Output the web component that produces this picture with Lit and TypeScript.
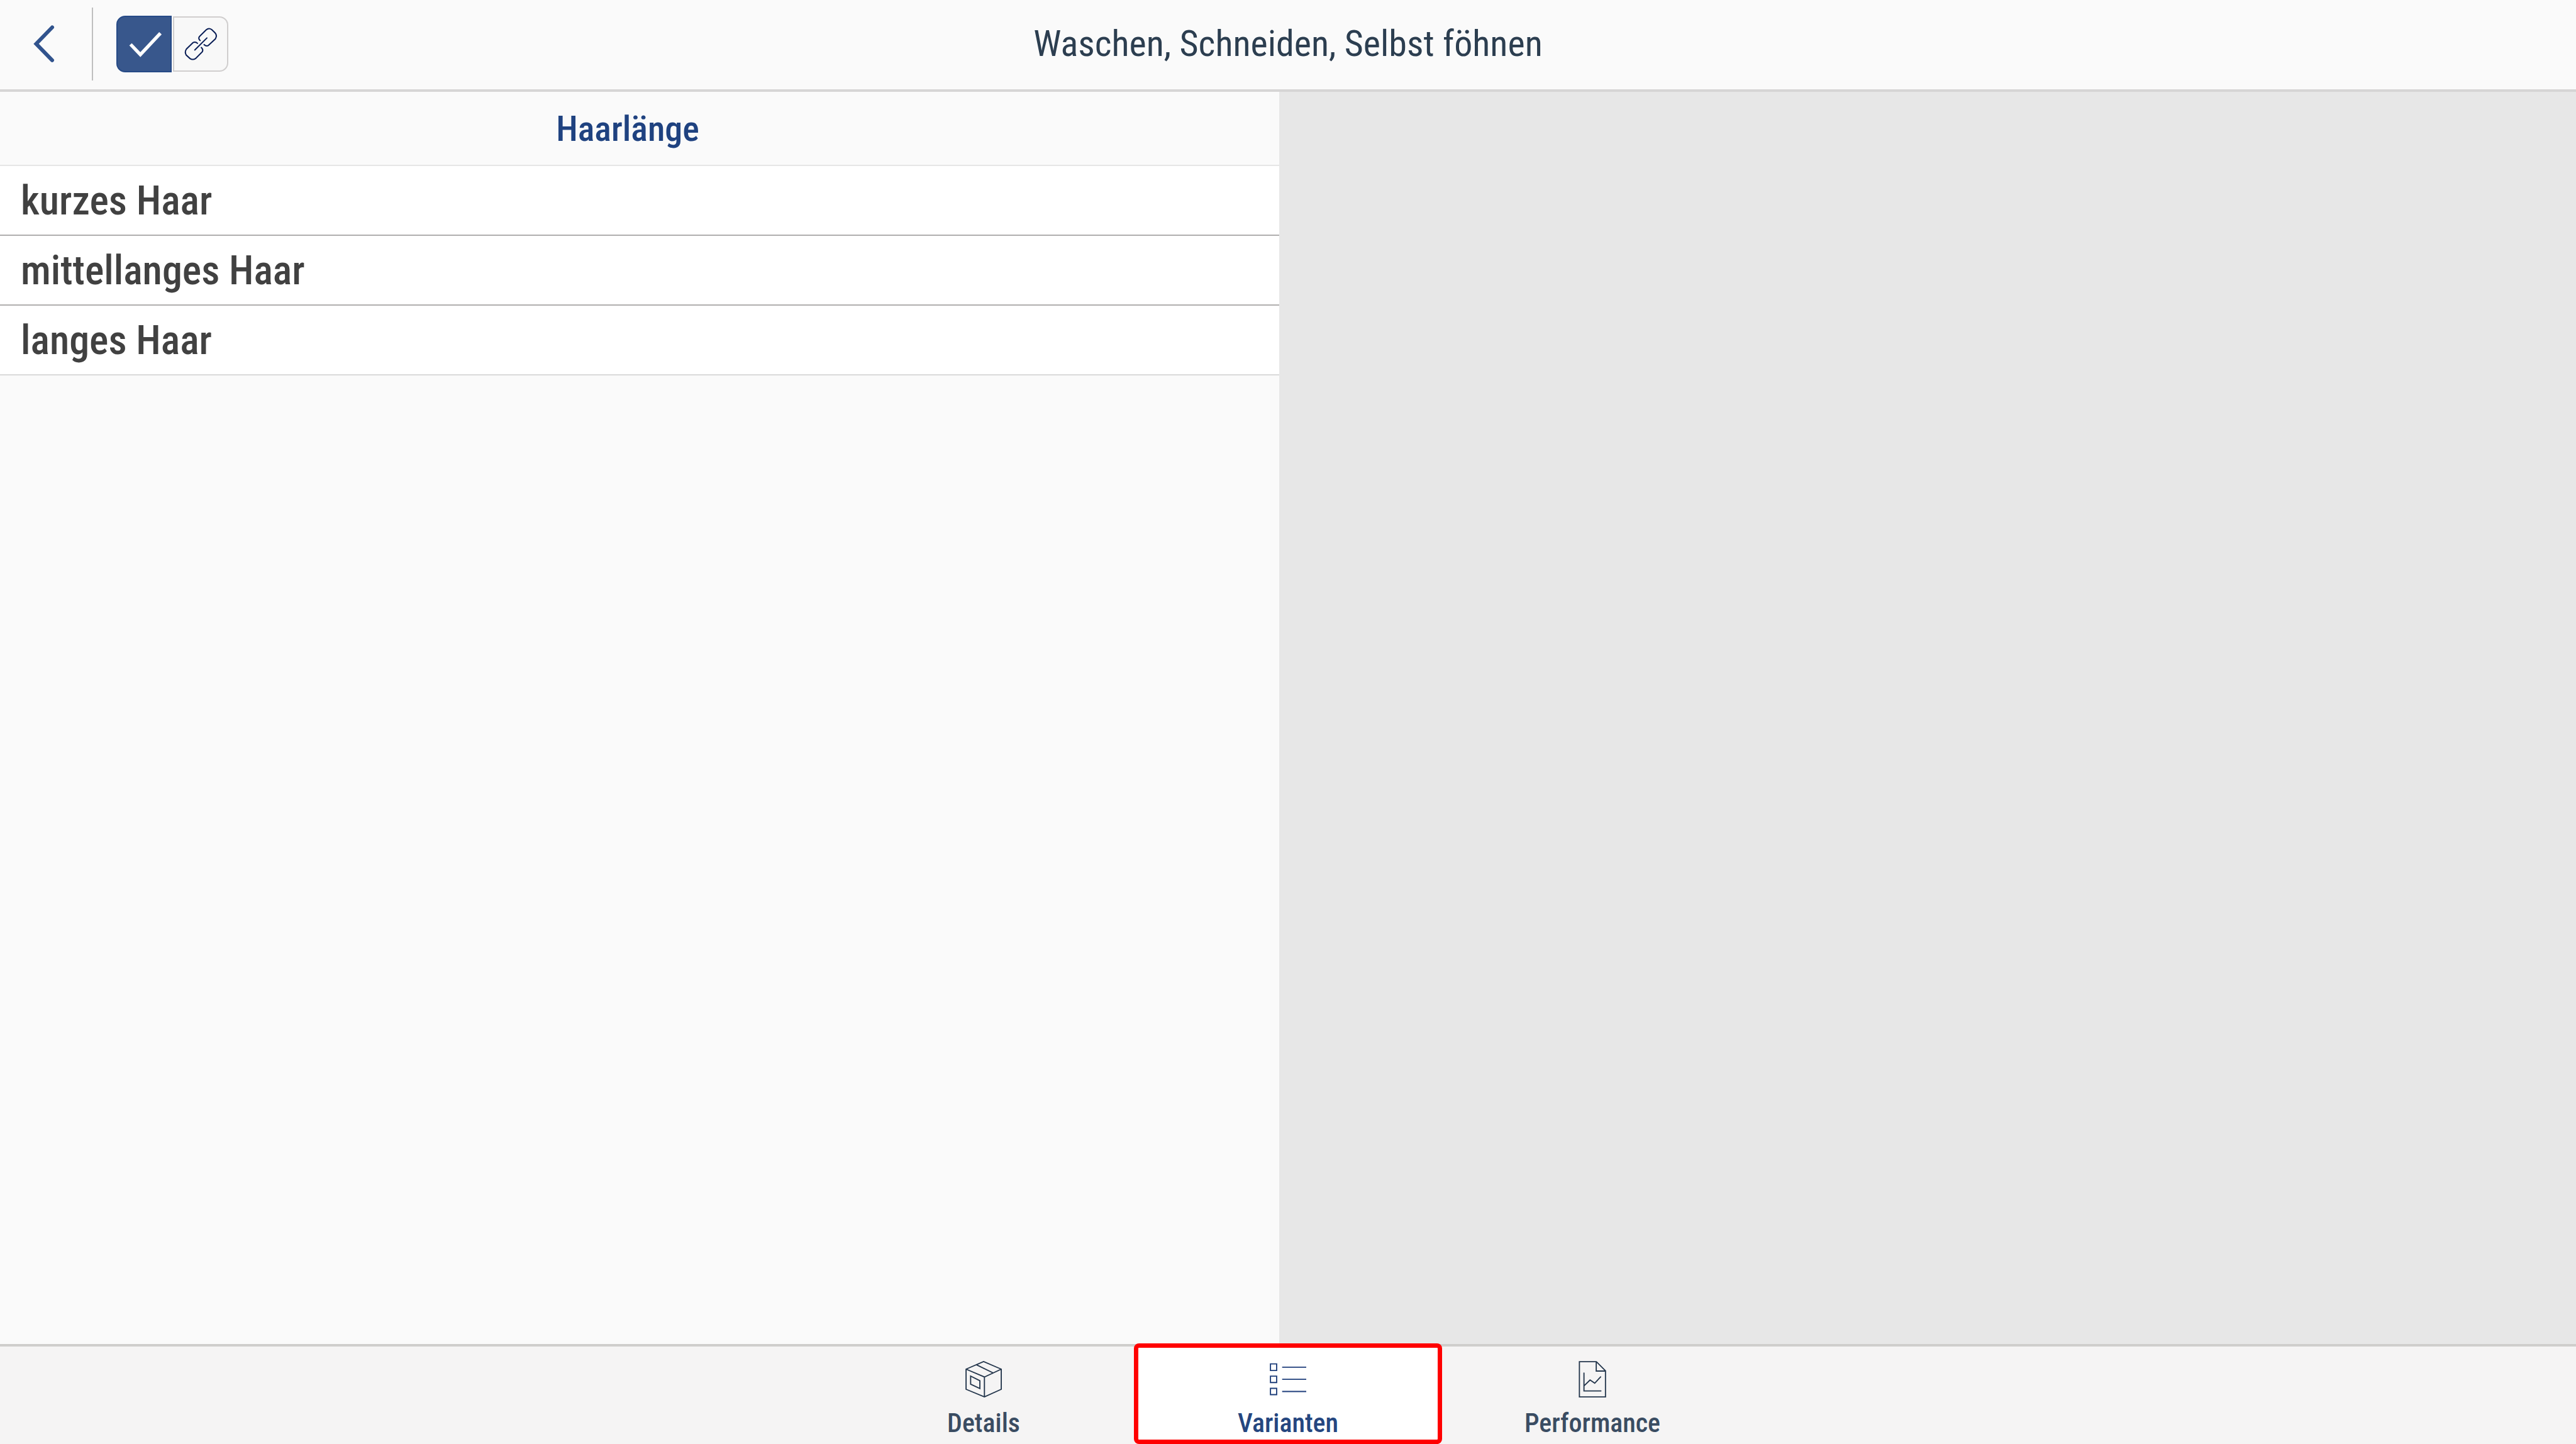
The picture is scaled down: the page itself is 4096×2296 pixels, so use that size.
import { LitElement, html, svg, css } from "lit";
import { customElement, state } from "lit/decorators.js";
import { classMap } from "lit/directives/class-map.js";

const boxIcon = svg`
  <path d="M356 270 506 205 657 270V442L513 507 356 442ZM356 270 513 337 657 270M513 337V507M446 233 585 301"/>
  <path d="M395 329 474 369V436L395 398Z"/>`;

const listIcon = svg`
  <path d="M1318 225H1371V281H1318ZM1318 330H1371V384H1318ZM1318 434H1371V488H1318Z"/>
  <path d="M1418 253H1624M1418 357H1624M1418 461H1624"/>`;

const reportIcon = svg`
  <path d="M670 206H815L893 284V507H670ZM814 206V286H893"/>
  <path stroke-linecap="round" d="M709 303V456H854M709 413 761 363 801 390 851 336"/>`;

const tabs = [
  { id: "details", label: "Details", viewBox: "350 200 312 312", icon: boxIcon },
  { id: "variants", label: "Varianten", viewBox: "1312 200 312 312", icon: listIcon },
  { id: "performance", label: "Performance", viewBox: "625 200 312 312", icon: reportIcon },
];

const lengths = ["kurzes Haar", "mittellanges Haar", "langes Haar"];

@customElement("app-root")
export class AppRoot extends LitElement {
  static styles = css`
    :host {
      display: flex;
      flex-direction: column;
      min-height: 100vh;
      background: #fafafa;
      color: #2c3e50;
      font-family: "Roboto Condensed", "Open Sans Condensed", "Liberation Sans", sans-serif;
    }
    * { box-sizing: border-box; }
    button {
      margin: 0;
      padding: 0;
      border: 0;
      background: none;
      color: inherit;
      font: inherit;
      cursor: pointer;
    }
    svg { display: block; fill: none; stroke: currentColor; }

    .header {
      display: grid;
      grid-template-columns: 1fr auto 1fr;
      align-items: center;
      height: 146px;
      padding-bottom: 2px;
      border-bottom: 4px solid #d6d5d5;
    }
    .tools { display: flex; align-items: center; }
    .back {
      display: flex;
      align-items: center;
      justify-content: center;
      width: 146px;
      height: 116px;
      padding-right: 6px;
      color: #31538d;
    }
    .divider { width: 2px; height: 116px; background: #bfbfbf; }
    .toggle { display: flex; align-items: center; gap: 2px; margin-left: 37px; }
    .active-flag {
      height: 90px;
      border: 2px solid #264a87;
      border-radius: 14px 0 0 14px;
      background: #38578c;
      color: #fff;
    }
    .link-flag {
      height: 88px;
      border: 2px solid #d0cece;
      border-radius: 0 14px 14px 0;
      background: #f8f8f8;
      color: #0b1f57;
    }
    .title {
      margin: 0;
      padding-bottom: 2px;
      font-size: 58px;
      line-height: 70px;
      font-weight: 400;
    }

    .main { display: grid; grid-template-columns: 2034fr 2062fr; flex: 1; }
    .detail { background: #e7e7e7; }
    .heading {
      margin: 0;
      padding: 24px 38px 22px 0;
      border-bottom: 2px solid #e6e6e6;
      color: #1f4280;
      font-size: 56px;
      line-height: 70px;
      font-weight: 500;
      text-align: center;
    }
    .list { margin: 0; padding: 0; list-style: none; }
    .item { border-bottom: 2px solid #b0afae; background: #fff; }
    .item:last-child { border-color: #dadada; }
    .row {
      display: block;
      width: 100%;
      padding: 21px 33px 18px;
      color: #414141;
      font-size: 64px;
      line-height: 70px;
      font-weight: 500;
      text-align: left;
    }

    .tabbar {
      display: flex;
      justify-content: center;
      border-top: 4px solid #cfcecc;
      background: #f5f4f4;
    }
    .tab {
      position: relative;
      display: flex;
      flex-direction: column;
      align-items: center;
      gap: 16px;
      width: 484px;
      padding: 23px 0 8px;
      color: #3a4c62;
      font-size: 42px;
      line-height: 50px;
      font-weight: 500;
    }
    .glyph { color: #24364c; }
    .selected { background: #fff; color: #25467f; }
    .selected .glyph { color: #1d3d7a; }
    .selected::after {
      content: "";
      position: absolute;
      inset: -5px -3px 0;
      border: 7px solid #f00;
      border-radius: 8px;
    }
  `;

  @state() private current = "variants";

  render() {
    return html`
      <header class="header">
        <div class="tools">
          <button class="back" aria-label="Zurück">
            <svg width="34" height="60" viewBox="53 40 34 60" stroke-width="6" stroke-linecap="round">
              <path d="M83 43.5 57.5 69.7 83 95.8" />
            </svg>
          </button>
          <span class="divider"></span>
          <div class="toggle">
            <button class="active-flag" aria-label="Aktiv" aria-pressed="true">
              <svg width="84" height="86" viewBox="187 27 84 86" stroke-width="5.4">
                <path d="M207.6 70.5 223.2 86.8 255.1 52.8" />
              </svg>
            </button>
            <button class="link-flag" aria-label="Verknüpfung">
              <svg width="84" height="84" viewBox="-4 -83 454 454" stroke-width="11" stroke-linecap="round">
                <path d="M219 114Q206 104 208 90Q209 82 216 76L272 21Q294 2 318 20L347 48Q367 70 350 100L291 155Q272 167 253 149" />
                <path d="M196 138Q178 120 156 133L101 187Q84 212 99 239L132 269Q155 284 179 269L237 211Q248 192 229 174" />
                <path d="M277 92 173 195" />
              </svg>
            </button>
          </div>
        </div>
        <h1 class="title">Waschen, Schneiden, Selbst föhnen</h1>
      </header>
      <main class="main">
        <section>
          <h2 class="heading">Haarlänge</h2>
          <ul class="list">
            ${lengths.map((name) => html`<li class="item"><button class="row">${name}</button></li>`)}
          </ul>
        </section>
        <section class="detail"></section>
      </main>
      <nav class="tabbar">
        ${tabs.map(
          (tab) => html`
            <button
              class=${classMap({ tab: true, selected: tab.id === this.current })}
              @click=${() => (this.current = tab.id)}
            >
              <svg class="glyph" width="58" height="58" viewBox=${tab.viewBox} stroke-width="10">${tab.icon}</svg>
              <span>${tab.label}</span>
            </button>
          `,
        )}
      </nav>
    `;
  }
}
